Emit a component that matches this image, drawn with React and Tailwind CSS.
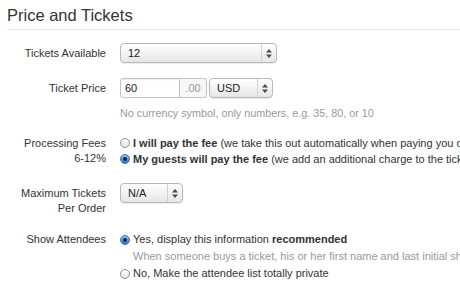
import React from 'react';

const Arrows = () => (
  <svg width="6" height="9" viewBox="0 0 6 9">
    <path d="M3 0 L6 3.5 L0 3.5 Z" fill="#4a4a4a" />
    <path d="M3 9 L6 5.5 L0 5.5 Z" fill="#4a4a4a" />
  </svg>
);

const Select = ({ value, width }) => (
  <div className={`flex items-center h-[20px] ${width} border border-[#b8b8b8] rounded-[4px] bg-linear-to-b from-white to-[#e6e6e6] shadow-[0_1px_1px_rgba(0,0,0,0.08)]`}>
    <span className="flex-1 pl-[7px] text-[11px] text-[#222]">{value}</span>
    <div className="flex items-center justify-center w-[15px] h-full border-l border-[#d2d2d2]">
      <Arrows />
    </div>
  </div>
);

const Radio = ({ checked }) =>
  checked ? (
    <span className="flex items-center justify-center shrink-0 w-[10px] h-[10px] rounded-full border border-[#3d6ea8] bg-linear-to-b from-[#8cc4f7] to-[#2a78d6]">
      <span className="w-[4px] h-[4px] rounded-full bg-[#142433]" />
    </span>
  ) : (
    <span className="shrink-0 w-[10px] h-[10px] rounded-full border border-[#8e8e8e] bg-linear-to-b from-white to-[#e4e4e4]" />
  );

const Label = ({ children }) => (
  <div className="w-[106px] shrink-0 text-right text-[11px] leading-[15px] text-[#333]">{children}</div>
);

export default function App() {
  return (
    <div className="w-[460px] h-[292px] overflow-hidden bg-white font-['Liberation_Sans',Arial,sans-serif] text-[#333]">
      <div className="h-[29px] pt-[5px] pl-[7px] text-[16.5px] leading-[20px] text-[#333]">Price and Tickets</div>
      <div className="ml-[7px] border-t border-[#e6e6e6]" />

      {/* Tickets Available */}
      <div className="flex items-center gap-[14px] mt-[13px] h-[20px]">
        <Label>Tickets Available</Label>
        <Select value="12" width="w-[157px]" />
      </div>

      {/* Ticket Price */}
      <div className="flex items-center gap-[14px] mt-[15px] h-[20px]">
        <Label>Ticket Price</Label>
        <div className="flex items-center">
          <div className="flex items-center h-[20px] w-[60px] border border-[#c4c4c4] rounded-l-[3px] bg-white shadow-[inset_0_1px_1px_rgba(0,0,0,0.08)] pl-[4px] text-[11px] text-[#222]">60</div>
          <div className="flex items-center justify-center h-[20px] w-[27px] border border-l-0 border-[#c4c4c4] rounded-r-[3px] bg-[#f7f7f7] text-[11px] text-[#9a9a9a]">.00</div>
          <div className="ml-[2px]">
            <Select value="USD" width="w-[64px]" />
          </div>
        </div>
      </div>

      <div className="flex gap-[14px] mt-[8px]">
        <div className="w-[106px] shrink-0" />
        <div className="text-[10.8px] leading-[14px] text-[#999] whitespace-nowrap">No currency symbol, only numbers, e.g. 35, 80, or 10</div>
      </div>

      {/* Processing Fees */}
      <div className="flex gap-[14px] mt-[15px]">
        <Label>
          <div className="leading-[16px]">Processing Fees</div>
          <div className="leading-[14px]">6-12%</div>
        </Label>
        <div className="flex flex-col text-[11px] leading-[16px] whitespace-nowrap">
          <div className="flex items-center gap-[3px]">
            <Radio />
            <span><b>I will pay the fee</b> (we take this out automatically when paying you out)</span>
          </div>
          <div className="flex items-center gap-[3px]">
            <Radio checked />
            <span><b>My guests will pay the fee</b> (we add an additional charge to the ticket price)</span>
          </div>
        </div>
      </div>

      {/* Maximum Tickets */}
      <div className="flex gap-[14px] mt-[16px]">
        <div className="w-[106px] shrink-0 text-right text-[11px] text-[#333]">
          <div className="leading-[20px]">Maximum Tickets</div>
          <div className="leading-[11px]">Per Order</div>
        </div>
        <Select value="N/A" width="w-[63px]" />
      </div>

      {/* Show Attendees */}
      <div className="flex gap-[14px] mt-[17px]">
        <div className="w-[106px] shrink-0 text-right text-[11px] leading-[17px] text-[#333]">Show Attendees</div>
        <div className="flex flex-col text-[11px] leading-[17px] whitespace-nowrap">
          <div className="flex items-center gap-[3px]">
            <Radio checked />
            <span>Yes, display this information <b>recommended</b></span>
          </div>
          <div className="pl-[13px] text-[#999]">When someone buys a ticket, his or her first name and last initial show up</div>
          <div className="flex items-center gap-[3px]">
            <Radio />
            <span>No, Make the attendee list totally private</span>
          </div>
        </div>
      </div>
    </div>
  );
}
